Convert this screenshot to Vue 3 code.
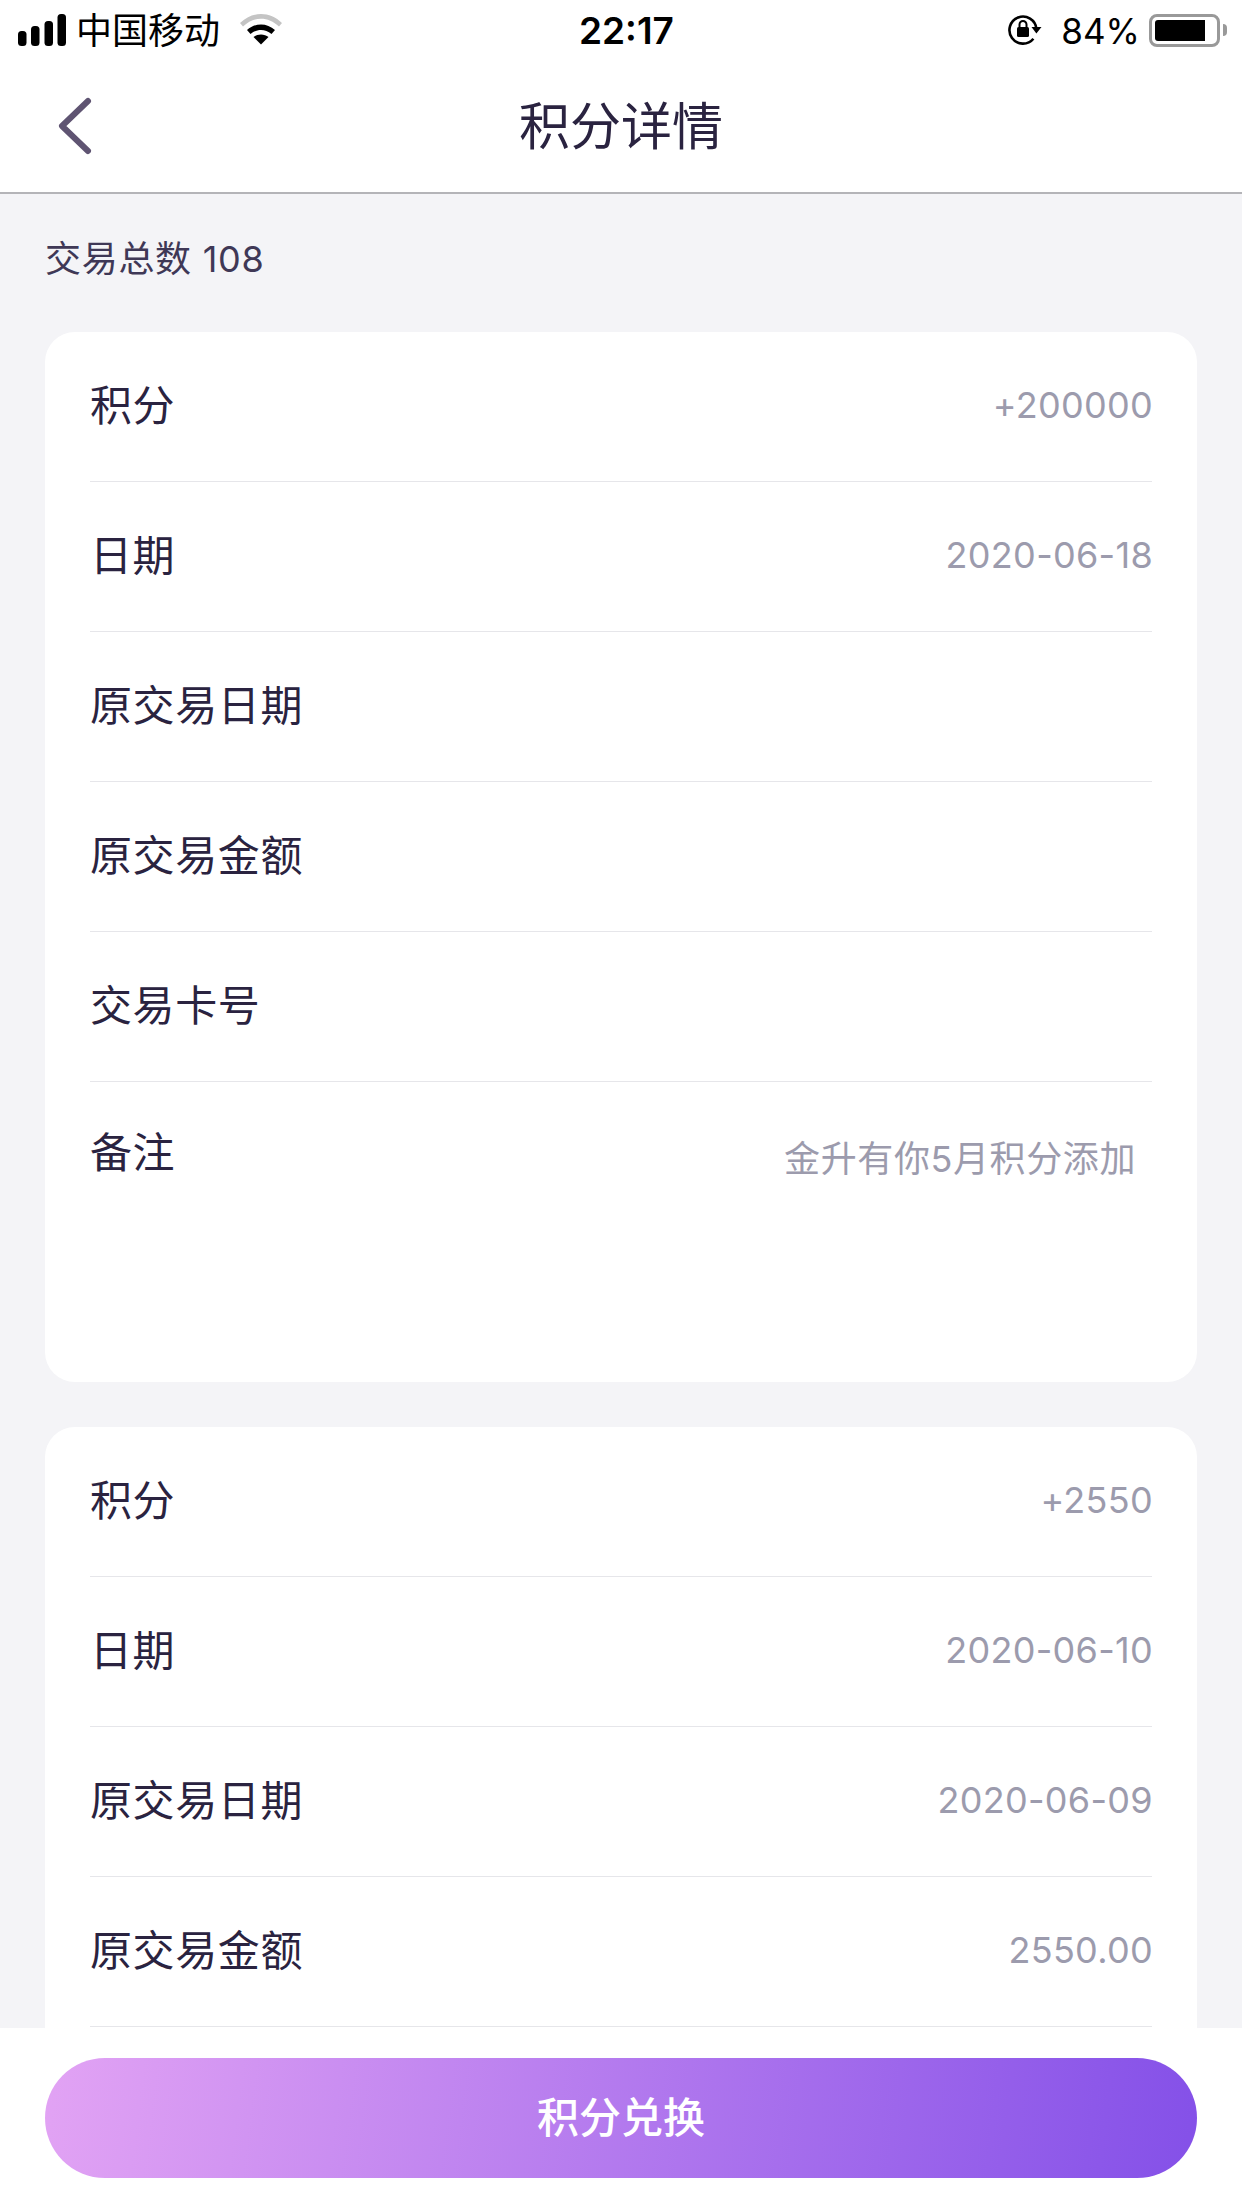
<template>
  <div class="page">
    <div class="status-bar">
      <div class="status-left">
        <svg class="signal" width="50" height="32" viewBox="0 0 50 32">
          <rect x="0" y="17" width="8.5" height="15" rx="3.5" />
          <rect x="13" y="12" width="8.5" height="20" rx="3.5" />
          <rect x="26.5" y="7" width="8.5" height="25" rx="3.5" />
          <rect x="39.5" y="0" width="8.5" height="32" rx="3.5" />
        </svg>
        <span class="carrier">中国移动</span>
        <svg class="wifi" width="42" height="32" viewBox="0 0 42 32">
          <path d="M0 10 C12 -2 30 -2 42 10 L39 13.5 C28 3 14 3 3 13.5 Z" fill="#c4c4c4" />
          <path d="M7 17 C15 9.5 27 9.5 35 17 L31.5 21 C25 15.5 17 15.5 10.5 21 Z" />
          <path d="M13.5 24 C17.5 20.5 24.5 20.5 28.5 24 L21 31.5 Z" />
        </svg>
      </div>
      <span class="time">22:17</span>
      <div class="status-right">
        <svg class="lock" width="37" height="32" viewBox="0 0 37 32">
          <path d="M31.4 14.8 A13.5 13.5 0 1 0 28.4 24.7" fill="none" stroke="#000" stroke-width="2.6" />
          <path d="M26.5 13 L36.5 13 L31.4 19.5 Z" />
          <rect x="12" y="13" width="12" height="10" rx="1.5" />
          <path d="M14.5 13 V10.5 A3.5 3.5 0 0 1 21.5 10.5 V13" fill="none" stroke="#000" stroke-width="2" />
        </svg>
        <span class="battery-text">84%</span>
        <div class="battery">
          <div class="battery-level"></div>
        </div>
        <div class="battery-nub"></div>
      </div>
    </div>

    <div class="nav-bar">
      <svg class="back" width="36" height="60" viewBox="0 0 36 60">
        <polyline points="31,5 5,30 31,55" fill="none" stroke="#5f5472" stroke-width="6" stroke-linecap="round" stroke-linejoin="round" />
      </svg>
      <span class="nav-title">积分详情</span>
    </div>

    <div class="content">
      <div class="total">交易总数 108</div>
      <div v-for="(card, i) in cards" :key="i" class="card">
        <div v-for="row in card.rows" :key="row.label" class="row">
          <span class="label">{{ row.label }}</span>
          <span class="value">{{ row.value }}</span>
        </div>
        <div v-if="card.remark" class="remark">
          <span class="label">备注</span>
          <span class="remark-text">{{ card.remark }}</span>
        </div>
      </div>
    </div>

    <div class="footer">
      <div class="exchange-btn">积分兑换</div>
    </div>
  </div>
</template>

<script setup>
const cards = [
  {
    rows: [
      { label: '积分', value: '+200000' },
      { label: '日期', value: '2020-06-18' },
      { label: '原交易日期', value: '' },
      { label: '原交易金额', value: '' },
      { label: '交易卡号', value: '' },
    ],
    remark: '金升有你5月积分添加',
  },
  {
    rows: [
      { label: '积分', value: '+2550' },
      { label: '日期', value: '2020-06-10' },
      { label: '原交易日期', value: '2020-06-09' },
      { label: '原交易金额', value: '2550.00' },
    ],
  },
]
</script>

<style>
html,
body {
  margin: 0;
  background: #fff;
}
</style>

<style scoped>
.page {
  display: flex;
  flex-direction: column;
  width: 1242px;
  height: 2208px;
  overflow: hidden;
  font-family: Inter, "Noto Sans CJK SC", sans-serif;
  background: #f4f4f7;
}

.status-bar {
  display: flex;
  flex: none;
  align-items: center;
  justify-content: space-between;
  position: relative;
  height: 60px;
  padding: 0 15px 0 18px;
  background: #fff;
  color: #000;
}

.status-left,
.status-right {
  display: flex;
  align-items: center;
}

.signal {
  margin-right: 8px;
  margin-top: -1px;
}

.carrier {
  font-size: 36px;
  line-height: 60px;
  margin-top: 2px;
}

.wifi {
  margin-left: 20px;
  margin-top: -2px;
}

.time {
  position: absolute;
  left: 579px;
  top: 1px;
  font-size: 37px;
  font-weight: 600;
  line-height: 60px;
}

.lock {
  margin-right: 19px;
}

.battery-text {
  font-size: 35px;
  line-height: 60px;
  margin-top: 1px;
  margin-right: 9px;
}

.battery {
  box-sizing: border-box;
  width: 71px;
  height: 33px;
  padding: 3px;
  border: 3px solid #999;
  border-radius: 8px;
}

.battery-level {
  width: 50px;
  height: 100%;
  background: #000;
  border-radius: 3px 0 0 3px;
}

.battery-nub {
  width: 4px;
  height: 12px;
  margin-left: 3px;
  background: #999;
  border-radius: 0 4px 4px 0;
}

.nav-bar {
  display: flex;
  flex: none;
  align-items: center;
  justify-content: center;
  position: relative;
  box-sizing: border-box;
  height: 134px;
  padding-bottom: 6px;
  background: #fff;
  border-bottom: 2px solid #b4b4b8;
}

.back {
  position: absolute;
  left: 57px;
  top: 36px;
}

.nav-title {
  font-size: 51px;
  color: #2a2340;
}

.content {
  flex: 1;
  min-height: 0;
  overflow: hidden;
  padding: 0 45px;
}

.total {
  height: 138px;
  font-size: 36px;
  line-height: 40px;
  padding-top: 45px;
  box-sizing: border-box;
  letter-spacing: 0.7px;
  color: #3f3856;
}

.card {
  margin-bottom: 45px;
  padding: 0 45px;
  background: #fff;
  border-radius: 30px;
}

.card:last-child {
  padding-bottom: 40px;
}

.row {
  display: flex;
  align-items: center;
  justify-content: space-between;
  box-sizing: border-box;
  height: 150px;
  padding-bottom: 9px;
  border-bottom: 1.5px solid #e6e6ea;
}

.label {
  font-size: 42px;
  letter-spacing: 0.6px;
  color: #2a2340;
}

.value {
  font-size: 36px;
  letter-spacing: 0.3px;
  margin-top: 6px;
  margin-right: -1px;
  color: #9c9bad;
}

.remark {
  display: flex;
  justify-content: space-between;
  height: 300px;
  padding: 41px 16px 0 0;
  box-sizing: border-box;
}

.remark .label {
  line-height: 60px;
}

.remark-text {
  font-size: 36px;
  line-height: 60px;
  margin-top: 6px;
  letter-spacing: 0.6px;
  color: #9c9bad;
}

.footer {
  flex: none;
  box-sizing: border-box;
  height: 180px;
  padding: 30px 45px;
  background: #fff;
}

.exchange-btn {
  height: 120px;
  border-radius: 60px;
  background: linear-gradient(97deg, #e2a3f4 0%, #8450e8 100%);
  color: #fff;
  font-size: 42px;
  font-weight: 500;
  line-height: 120px;
  text-align: center;
}
</style>
